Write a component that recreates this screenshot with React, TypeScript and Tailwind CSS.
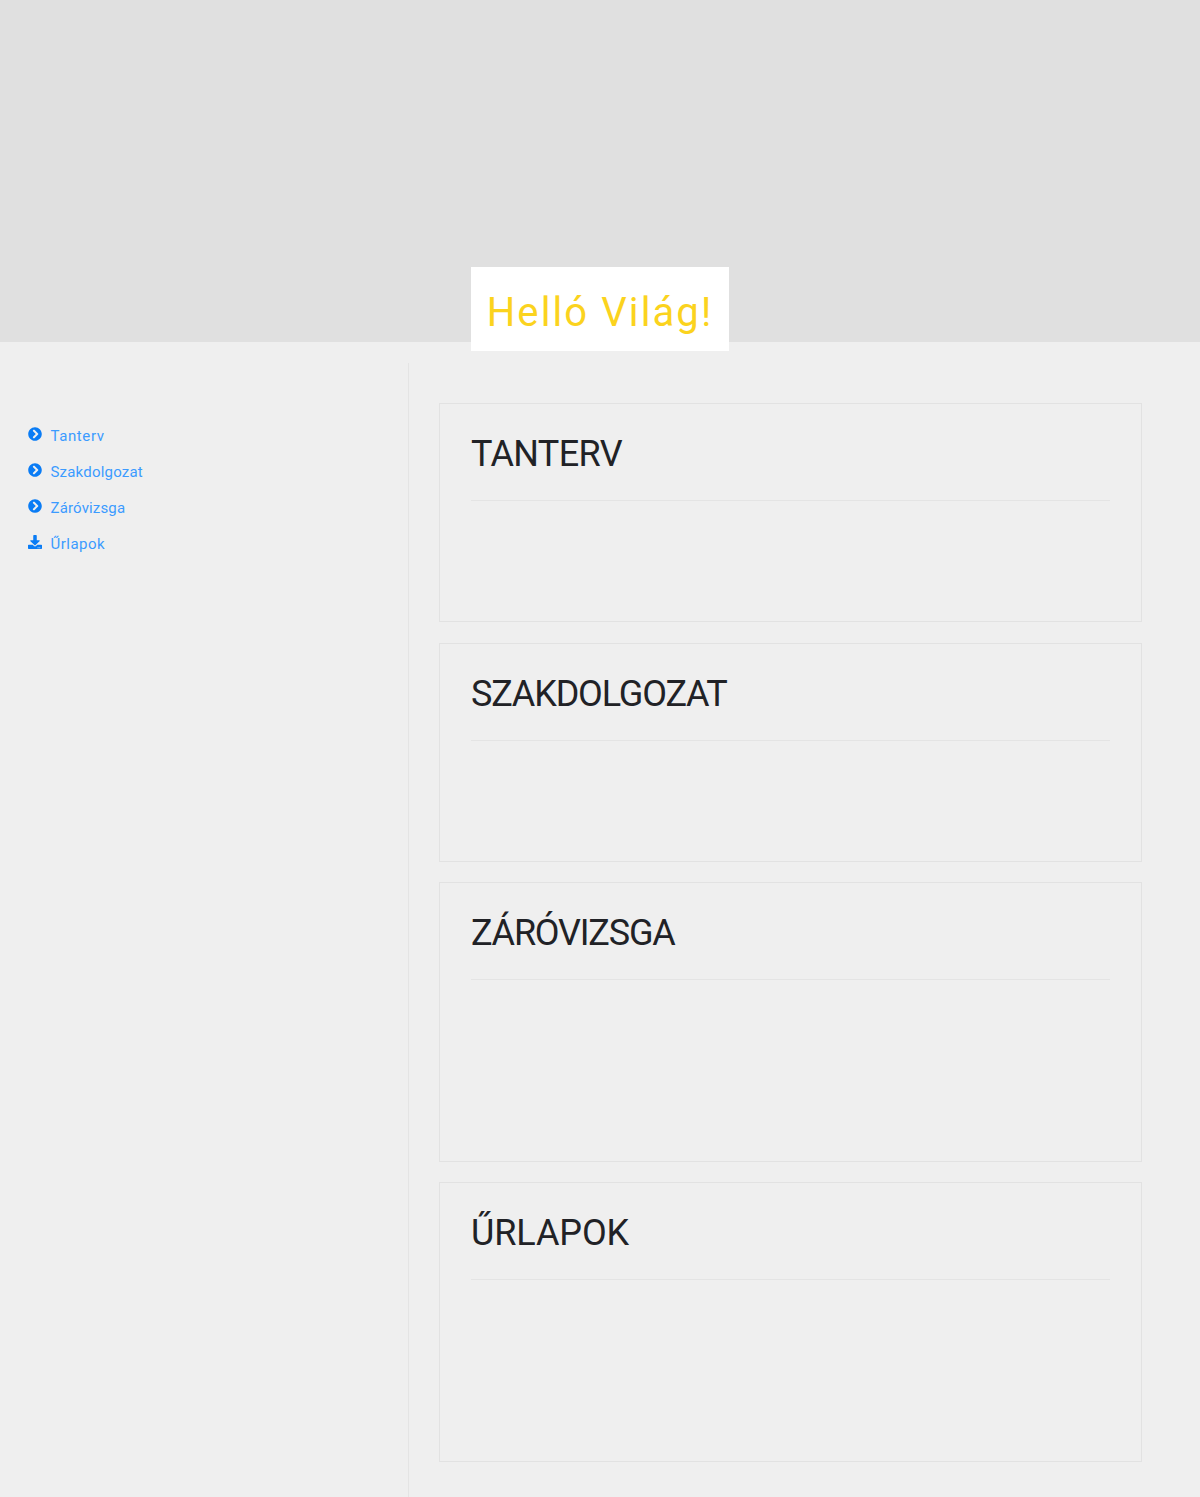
import { FaChevronCircleRight, FaDownload } from "react-icons/fa";

const links = [
  { label: "Tanterv", Icon: FaChevronCircleRight, track: "tracking-[0.6px]" },
  { label: "Szakdolgozat", Icon: FaChevronCircleRight, track: "tracking-[0.2px]" },
  { label: "Záróvizsga", Icon: FaChevronCircleRight, track: "tracking-[0.15px]" },
  { label: "Űrlapok", Icon: FaDownload, track: "tracking-[0.5px]" },
];

const sections = [
  { title: "TANTERV", h: "h-[219px]", track: "tracking-[-0.65px]" },
  { title: "SZAKDOLGOZAT", h: "h-[219px]", track: "tracking-[-1.15px]" },
  { title: "ZÁRÓVIZSGA", h: "h-[279.6px]", track: "tracking-[-1.2px]" },
  { title: "ŰRLAPOK", h: "h-[279.6px]", track: "tracking-[-0.1px]" },
];

export default function App() {
  return (
    <div className="h-[1497px] overflow-hidden bg-[#efefef] font-['Roboto',sans-serif]">
      <header className="h-[342px] bg-[#e0e0e0] flex justify-center">
        <div className="mt-[267px] h-[84px] w-[258px] bg-white flex items-center justify-center pt-[7px] relative">
          <h1 className="text-[40px] leading-none tracking-[2.1px] text-[#fbd31e] whitespace-nowrap">Helló Világ!</h1>
        </div>
      </header>
      <div className="flex mt-[21px]">
        <aside className="w-[409px] h-[1134px] border-r border-[#e4e4e4] pt-[54px] pl-[28px]">
          <ul className="flex flex-col">
            {links.map(({ label, Icon, track }) => (
              <li key={label} className={`h-[36px] flex items-center gap-[8.5px] text-[15px] text-[#3b9bff] ${track}`}>
                <Icon className="text-[#0a7cf5] w-[14px] h-[14px] shrink-0 -mt-[2px]" />
                <span className="pt-[2px]">{label}</span>
              </li>
            ))}
          </ul>
        </aside>
        <main className="ml-[30px] w-[703px] pt-[40px] flex flex-col gap-[20.6px]">
          {sections.map((s) => (
            <section key={s.title} className={`${s.h} border border-[#e2e2e2] px-[31px] pt-[28px]`}>
              <h2 className={`h-[69px] border-b border-[#e4e4e4] text-[36px] leading-[44px] text-[#212226] ${s.track}`}>{s.title}</h2>
            </section>
          ))}
        </main>
      </div>
    </div>
  );
}
